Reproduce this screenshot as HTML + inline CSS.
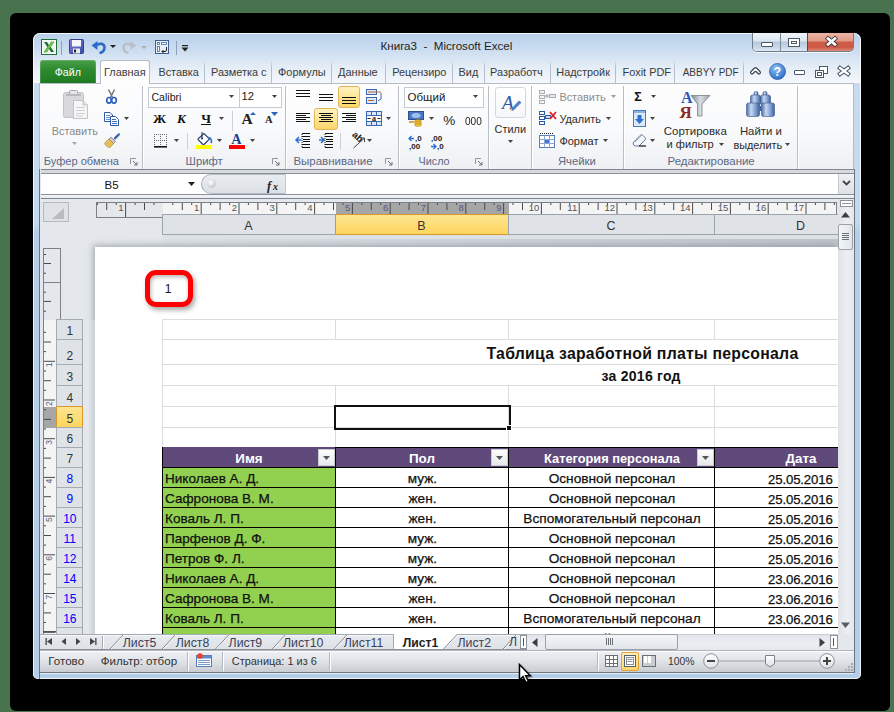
<!DOCTYPE html>
<html><head><meta charset="utf-8">
<style>
*{box-sizing:border-box}
html,body{margin:0;padding:0}
body{width:894px;height:712px;overflow:hidden;position:relative;background:#49724e;font-family:"Liberation Sans",sans-serif;color:#000}
.a{position:absolute}
svg.a{overflow:visible}
.t{position:absolute;white-space:pre;line-height:1}
</style></head><body>
<div class="a" style="left:10px;top:13px;width:880px;height:698px;background:#000;border-radius:6px"></div>
<div class="a" style="left:33px;top:33px;width:828px;height:646px;border-radius:7px 7px 5px 5px;background:linear-gradient(#c9dcf0 0,#c4d9ef 190px,#b4cde8 200px,#b4cde8 100%);box-shadow:inset 0 0 0 1px rgba(255,255,255,.8)"></div>
<div class="a" style="left:34px;top:34px;width:826px;height:49px;border-radius:6px 6px 0 0;background:linear-gradient(#b9d1ea 0,#c9dbef 14px,#e3ecf6 32px,#f5f8fc 49px)"></div>
<div class="t " style="left:380.5px;top:39.7px;font-size:11.6px;color:#1e1e1e;font-weight:400;">Книга3  -  Microsoft Excel</div>
<div class="a" style="left:752px;top:33px;width:102px;height:19px;border:1px solid #6f7d8c;border-top:none;border-radius:0 0 5px 5px;overflow:hidden;box-shadow:0 1px 0 rgba(255,255,255,.7)">
<div class="a" style="left:0;top:0;width:28px;height:18px;background:linear-gradient(#f2f6fb 0,#dbe5f0 45%,#b9c9db 50%,#c9d8e8 80%,#dfe9f4 100%);border-right:1px solid #7d8a99"></div>
<div class="a" style="left:28px;top:0;width:27px;height:18px;background:linear-gradient(#f2f6fb 0,#dbe5f0 45%,#b9c9db 50%,#c9d8e8 80%,#dfe9f4 100%);border-right:1px solid #7d3a2c"></div>
<div class="a" style="left:55px;top:0;width:46px;height:18px;background:linear-gradient(#ecb4a6 0,#e29c8a 42%,#cf5d48 52%,#cc5843 78%,#dc8a78 100%)"></div>
</div>
<div class="a" style="left:761px;top:42px;width:12px;height:5px;background:#fff;border:1px solid #4c5866;border-radius:1px"></div>
<div class="a" style="left:788px;top:38px;width:12px;height:9px;border:1px solid #4c5866;background:#fff;box-shadow:inset 0 0 0 2px #fff, inset 0 0 0 3px #4c5866"></div>
<svg class="a" style="left:826px;top:37px;" width="11" height="9" viewBox="0 0 11 9"><path d="M2 1.5 L9 7.5 M9 1.5 L2 7.5" stroke="#4a3c3a" stroke-width="4.4" stroke-linecap="square"/><path d="M2 1.5 L9 7.5 M9 1.5 L2 7.5" stroke="#fff" stroke-width="2.6" stroke-linecap="square"/></svg>
<svg class="a" style="left:41px;top:39px;" width="16" height="16" viewBox="0 0 16 16"><rect x="0.5" y="0.5" width="15" height="15" fill="#fff" stroke="#1f6e35"/><rect x="1.5" y="1.5" width="13" height="13" fill="#eef5ee"/><path d="M3 3 H6 L8 6.3 L10 3 H13 L9.6 8 L13 13 H10 L8 9.7 L6 13 H3 L6.4 8Z" fill="#1f6a35"/><path d="M10.2 2.5 H13 L5.8 13.5 H3Z" fill="#6cc24a"/></svg>
<div class="a" style="left:61px;top:41px;width:1px;height:14px;background:#8ea3bb"></div>
<svg class="a" style="left:69px;top:39px;" width="15" height="15" viewBox="0 0 15 15"><defs><linearGradient id="sv" x1="0" y1="0" x2="1" y2="1"><stop offset="0" stop-color="#8a7ad8"/><stop offset="1" stop-color="#2f4fa8"/></linearGradient></defs><rect x="0.5" y="0.5" width="14" height="14" rx="1" fill="url(#sv)" stroke="#34408a"/><rect x="3" y="1" width="9" height="6.5" fill="#f4f6fa"/><rect x="4" y="9.5" width="7" height="5" fill="#e8eaf0"/><rect x="5" y="10.5" width="2" height="3" fill="#222"/></svg>
<svg class="a" style="left:91px;top:40px;" width="15" height="14" viewBox="0 0 15 14"><path d="M0.5 5.5 L6.5 1 V10Z" fill="#2e6bc6"/><path d="M5 5.5 C9 2.5 13.5 3.5 13.5 7.5 C13.5 10.5 11 12.5 8.5 13" fill="none" stroke="#2e6bc6" stroke-width="2.6"/></svg>
<svg class="a" style="left:110px;top:45px;" width="6" height="3" viewBox="0 0 6 3"><path d="M0 0H6L3 3Z" fill="#222"/></svg>
<svg class="a" style="left:122px;top:40px;" width="15" height="14" viewBox="0 0 15 14"><path d="M14.5 5.5 L8.5 1 V10Z" fill="#b9c0c8"/><path d="M10 5.5 C6 2.5 1.5 3.5 1.5 7.5 C1.5 10.5 4 12.5 6.5 13" fill="none" stroke="#b9c0c8" stroke-width="2.6"/></svg>
<svg class="a" style="left:141px;top:46px;" width="6" height="3" viewBox="0 0 6 3"><path d="M0 0H6L3 3Z" fill="#a8aeb5"/></svg>
<svg class="a" style="left:155px;top:40px;" width="14" height="14" viewBox="0 0 14 14"><rect x="0.5" y="0.5" width="13" height="13" fill="#e6eef8" stroke="#3f5f95"/><rect x="2.5" y="2.5" width="2" height="2" fill="#fff" stroke="#4a6aa0" stroke-width=".8"/><rect x="6.5" y="2.5" width="5" height="2" fill="#fff" stroke="#4a6aa0" stroke-width=".8"/><rect x="2.5" y="6.5" width="2" height="5" fill="#fff" stroke="#4a6aa0" stroke-width=".8"/><path d="M11.5 7 V10 Q11.5 11.5 10 11.5 H7 M8.5 10 L7 11.5 L8.5 13" fill="none" stroke="#222" stroke-width="1"/></svg>
<div class="a" style="left:176px;top:41px;width:1px;height:14px;background:#8ea3bb"></div>
<svg class="a" style="left:181px;top:45px;" width="8" height="8" viewBox="0 0 8 8"><rect x="1" y="0" width="6" height="1.2" fill="#222"/><path d="M0.5 2.5H7.5L4 6.5Z" fill="#222"/></svg>
<div class="a" style="left:40px;top:60px;width:56px;height:24px;border-radius:3px 3px 0 0;background:linear-gradient(#4aa04a 0,#2e8a2e 40%,#1e7a22 100%);box-shadow:inset 0 0 0 1px rgba(255,255,255,.15)"></div>
<div class="t " style="left:54.7px;top:66.9px;font-size:10.7px;color:#fff;font-weight:400;">Файл</div>
<div class="a" style="left:100px;top:60px;width:50px;height:24px;border:1px solid #b6bcc6;border-bottom:none;border-radius:3px 3px 0 0;background:linear-gradient(#fff,#fdfdfe)"></div>
<div class="t " style="left:104.0px;top:66.8px;font-size:10.93px;color:#3b3b3b;font-weight:400;">Главная</div>
<div class="t " style="left:158.4px;top:66.9px;font-size:10.9px;color:#3b3b3b;font-weight:400;">Вставка</div>
<div class="t " style="left:211.0px;top:66.9px;font-size:10.9px;color:#3b3b3b;font-weight:400;width:56px;overflow:hidden">Разметка с</div>
<div class="t " style="left:278.0px;top:66.8px;font-size:10.96px;color:#3b3b3b;font-weight:400;">Формулы</div>
<div class="t " style="left:338.0px;top:66.8px;font-size:11px;color:#3b3b3b;font-weight:400;">Данные</div>
<div class="t " style="left:392.2px;top:66.9px;font-size:10.9px;color:#3b3b3b;font-weight:400;width:55px;overflow:hidden">Рецензиро</div>
<div class="t " style="left:458.6px;top:66.9px;font-size:10.9px;color:#3b3b3b;font-weight:400;">Вид</div>
<div class="t " style="left:490.1px;top:66.9px;font-size:10.9px;color:#3b3b3b;font-weight:400;width:54px;overflow:hidden">Разработч</div>
<div class="t " style="left:556.3px;top:66.9px;font-size:10.9px;color:#3b3b3b;font-weight:400;width:54px;overflow:hidden">Надстройк</div>
<div class="t " style="left:622.5px;top:66.9px;font-size:10.9px;color:#3b3b3b;font-weight:400;">Foxit PDF</div>
<div class="t " style="left:682.7px;top:67.6px;font-size:10px;color:#3b3b3b;font-weight:400;">ABBYY PDF</div>
<div class="a" style="left:204px;top:60px;width:1px;height:23px;background:linear-gradient(rgba(170,182,196,0),#b4bfcc 30%,#b4bfcc)"></div>
<div class="a" style="left:271px;top:60px;width:1px;height:23px;background:linear-gradient(rgba(170,182,196,0),#b4bfcc 30%,#b4bfcc)"></div>
<div class="a" style="left:331px;top:60px;width:1px;height:23px;background:linear-gradient(rgba(170,182,196,0),#b4bfcc 30%,#b4bfcc)"></div>
<div class="a" style="left:385px;top:60px;width:1px;height:23px;background:linear-gradient(rgba(170,182,196,0),#b4bfcc 30%,#b4bfcc)"></div>
<div class="a" style="left:452px;top:60px;width:1px;height:23px;background:linear-gradient(rgba(170,182,196,0),#b4bfcc 30%,#b4bfcc)"></div>
<div class="a" style="left:484px;top:60px;width:1px;height:23px;background:linear-gradient(rgba(170,182,196,0),#b4bfcc 30%,#b4bfcc)"></div>
<div class="a" style="left:550px;top:60px;width:1px;height:23px;background:linear-gradient(rgba(170,182,196,0),#b4bfcc 30%,#b4bfcc)"></div>
<div class="a" style="left:615px;top:60px;width:1px;height:23px;background:linear-gradient(rgba(170,182,196,0),#b4bfcc 30%,#b4bfcc)"></div>
<div class="a" style="left:674px;top:60px;width:1px;height:23px;background:linear-gradient(rgba(170,182,196,0),#b4bfcc 30%,#b4bfcc)"></div>
<div class="a" style="left:743px;top:60px;width:1px;height:23px;background:linear-gradient(rgba(170,182,196,0),#b4bfcc 30%,#b4bfcc)"></div>
<svg class="a" style="left:750px;top:66px;" width="11" height="9" viewBox="0 0 11 9"><path d="M2 6.5 L5.5 3 L9 6.5" fill="none" stroke="#3d4650" stroke-width="4" stroke-linecap="round" stroke-linejoin="round"/><path d="M2 6.5 L5.5 3 L9 6.5" fill="none" stroke="#fff" stroke-width="1.6" stroke-linecap="round" stroke-linejoin="round"/></svg>
<svg class="a" style="left:769px;top:63px;" width="17" height="17" viewBox="0 0 17 17"><defs><radialGradient id="hg" cx="40%" cy="30%" r="70%"><stop offset="0" stop-color="#8fc1f5"/><stop offset="1" stop-color="#2c6fcc"/></radialGradient></defs><circle cx="8.5" cy="8.5" r="8" fill="url(#hg)" stroke="#2a5ea8" stroke-width="0.8"/><text x="8.5" y="13" font-family="Liberation Sans" font-weight="700" font-size="12" fill="#fff" text-anchor="middle">?</text></svg>
<div class="a" style="left:794px;top:70px;width:11px;height:5px;border:1px solid #4c5866;background:#fff;border-radius:1px"></div>
<svg class="a" style="left:815px;top:66px;" width="13" height="12" viewBox="0 0 13 12"><rect x="4.5" y="0.5" width="8" height="7" fill="#fff" stroke="#4c5866"/><rect x="0.5" y="4.5" width="8" height="7" fill="#fff" stroke="#4c5866"/><rect x="2.5" y="6.5" width="4" height="3" fill="none" stroke="#4c5866"/></svg>
<svg class="a" style="left:838px;top:66px;" width="12" height="10" viewBox="0 0 12 10"><path d="M2 2 L10 8 M10 2 L2 8" stroke="#4c5866" stroke-width="4.2" stroke-linecap="square"/><path d="M2 2 L10 8 M10 2 L2 8" stroke="#fff" stroke-width="2.2" stroke-linecap="square"/></svg>
<div class="a" style="left:39px;top:83px;width:815px;height:87px;border:1px solid #b6bcc6;border-bottom-color:#9da4ad;background:linear-gradient(#fdfdfe 0,#f9fafb 45px,#eef0f3 85px)"></div>
<div class="a" style="left:101px;top:83px;width:48px;height:1px;background:#fdfdfe"></div>
<div class="a" style="left:142px;top:86px;width:2px;height:83px;border-left:1px solid #b9bfc7;border-right:1px solid #fff"></div>
<div class="a" style="left:285px;top:86px;width:2px;height:83px;border-left:1px solid #b9bfc7;border-right:1px solid #fff"></div>
<div class="a" style="left:398px;top:86px;width:2px;height:83px;border-left:1px solid #b9bfc7;border-right:1px solid #fff"></div>
<div class="a" style="left:488px;top:86px;width:2px;height:83px;border-left:1px solid #b9bfc7;border-right:1px solid #fff"></div>
<div class="a" style="left:531px;top:86px;width:2px;height:83px;border-left:1px solid #b9bfc7;border-right:1px solid #fff"></div>
<div class="a" style="left:623px;top:86px;width:2px;height:83px;border-left:1px solid #b9bfc7;border-right:1px solid #fff"></div>
<div class="a" style="left:797px;top:86px;width:2px;height:83px;border-left:1px solid #b9bfc7;border-right:1px solid #fff"></div>
<div class="t " style="left:43.7px;top:155.9px;font-size:11.08px;color:#5d6782;font-weight:400;">Буфер обмена</div>
<div class="t " style="left:185.6px;top:155.7px;font-size:11.3px;color:#5d6782;font-weight:400;">Шрифт</div>
<div class="t " style="left:293.4px;top:155.6px;font-size:11.5px;color:#5d6782;font-weight:400;">Выравнивание</div>
<div class="t " style="left:418.5px;top:156.2px;font-size:10.8px;color:#5d6782;font-weight:400;">Число</div>
<div class="t " style="left:557.9px;top:155.7px;font-size:11.3px;color:#5d6782;font-weight:400;">Ячейки</div>
<div class="t " style="left:667.6px;top:155.6px;font-size:11.45px;color:#5d6782;font-weight:400;">Редактирование</div>
<svg class="a" style="left:130px;top:158px;" width="8" height="8" viewBox="0 0 8 8"><path d="M0.5 6 V0.5 H6" fill="none" stroke="#8d96a0"/><path d="M3 3 L7 7 M7 4 V7 H4" fill="none" stroke="#6a737d"/></svg>
<svg class="a" style="left:272px;top:158px;" width="8" height="8" viewBox="0 0 8 8"><path d="M0.5 6 V0.5 H6" fill="none" stroke="#8d96a0"/><path d="M3 3 L7 7 M7 4 V7 H4" fill="none" stroke="#6a737d"/></svg>
<svg class="a" style="left:385px;top:158px;" width="8" height="8" viewBox="0 0 8 8"><path d="M0.5 6 V0.5 H6" fill="none" stroke="#8d96a0"/><path d="M3 3 L7 7 M7 4 V7 H4" fill="none" stroke="#6a737d"/></svg>
<svg class="a" style="left:475px;top:158px;" width="8" height="8" viewBox="0 0 8 8"><path d="M0.5 6 V0.5 H6" fill="none" stroke="#8d96a0"/><path d="M3 3 L7 7 M7 4 V7 H4" fill="none" stroke="#6a737d"/></svg>
<svg class="a" style="left:62px;top:89px;" width="27" height="31" viewBox="0 0 27 31">
<rect x="1.5" y="3.5" width="20" height="25" rx="2" fill="#d9d8dc" stroke="#c2c1c6"/>
<rect x="7.5" y="1.5" width="8" height="4" rx="1" fill="#e6e6e8" stroke="#a9a9ad"/>
<rect x="4" y="5" width="15" height="2" fill="#b9b9bd"/>
<path d="M11.5 11.5 H21 L25.5 16 V29.5 H11.5 Z" fill="#f7f7f8" stroke="#c3c3c7"/>
<path d="M21 11.5 V16 H25.5" fill="#e1e1e3" stroke="#c3c3c7"/>
<g stroke="#d0d0d4"><path d="M14 18.5H23M14 21.5H23M14 24.5H23M14 27H21"/></g></svg>
<div class="t " style="left:51.7px;top:126.2px;font-size:10.9px;color:#8a8a8a;font-weight:400;">Вставить</div>
<svg class="a" style="left:72px;top:142px;" width="5" height="3" viewBox="0 0 5 3"><path d="M0 0H5L2.5 3Z" fill="#a6a6a6"/></svg>
<svg class="a" style="left:106px;top:89px;" width="11" height="15" viewBox="0 0 11 15"><path d="M2.5 0.5 L6.5 8.5 M8.5 0.5 L4.5 8.5" stroke="#6e7680" stroke-width="1.5"/>
<ellipse cx="3" cy="11.3" rx="2.3" ry="2.8" fill="#fff" stroke="#2a5fbf" stroke-width="1.7"/><ellipse cx="8" cy="11.3" rx="2.3" ry="2.8" fill="#fff" stroke="#2a5fbf" stroke-width="1.7"/></svg>
<svg class="a" style="left:104px;top:112px;" width="15" height="14" viewBox="0 0 15 14"><path d="M0.5 0.5 H6 L8.5 3 V9.5 H0.5Z" fill="#fff" stroke="#2c5aa8"/><path d="M2 3.5H6M2 5.5H7M2 7.5H7" stroke="#6a96d8"/>
<path d="M6.5 4.5 H11.5 L14.5 7.5 V13.5 H6.5Z" fill="#fff" stroke="#2c5aa8"/><path d="M8 7.5H12M8 9.5H13M8 11.5H13" stroke="#3d6fc0"/></svg>
<svg class="a" style="left:124px;top:117px;" width="5" height="3" viewBox="0 0 5 3"><path d="M0 0H5L2.5 3Z" fill="#444"/></svg>
<svg class="a" style="left:104px;top:133px;" width="16" height="15" viewBox="0 0 16 15"><path d="M10 5 L14 1 Q15 0 15.6 0.8 Q16 1.6 15 2.5 L11 6.5Z" fill="#3a62b8" stroke="#2a4a90" stroke-width=".6"/>
<path d="M7 4 L11.5 8.5 L9.5 10.5 L5 6Z" fill="#c8ccd2" stroke="#666" stroke-width=".6"/>
<path d="M5 6 L9.5 10.5 L6 14.5 Q3 14 1 11.5 Q0.5 10 1.5 9Z" fill="#ecc860" stroke="#a07c2a" stroke-width=".7"/>
<path d="M3 10 L6 12.5 M4.5 8.5 L7.5 11" stroke="#c09a3a" stroke-width=".7"/></svg>
<div class="a" style="left:148px;top:87px;width:92px;height:21px;background:#fff;border:1px solid #c5cbd3"></div>
<div class="a" style="left:239px;top:87px;width:43px;height:21px;background:#fff;border:1px solid #c5cbd3"></div>
<div class="t " style="left:151.4px;top:91.9px;font-size:10.6px;color:#1a1a1a;font-weight:400;">Calibri</div>
<div class="t " style="left:241.5px;top:91.4px;font-size:11.2px;color:#1a1a1a;font-weight:400;">12</div>
<svg class="a" style="left:229px;top:95px;" width="5" height="3" viewBox="0 0 5 3"><path d="M0 0H5L2.5 3Z" fill="#444"/></svg>
<svg class="a" style="left:272px;top:95px;" width="5" height="3" viewBox="0 0 5 3"><path d="M0 0H5L2.5 3Z" fill="#444"/></svg>
<div class="t " style="left:153.0px;top:112.4px;font-size:13.2px;color:#111;font-weight:700;font-family:'Liberation Serif',serif;">Ж</div>
<div class="t " style="left:177.0px;top:112.4px;font-size:13.2px;color:#111;font-weight:700;font-family:'Liberation Serif',serif;font-style:italic">К</div>
<div class="t " style="left:201.2px;top:112.4px;font-size:13.2px;color:#111;font-weight:700;font-family:'Liberation Serif',serif;">Ч</div>
<div class="a" style="left:201px;top:124px;width:10px;height:1px;background:#111"></div>
<svg class="a" style="left:219px;top:117px;" width="5" height="3" viewBox="0 0 5 3"><path d="M0 0H5L2.5 3Z" fill="#444"/></svg>
<div class="a" style="left:232px;top:111px;width:1px;height:20px;background:#ccd1d8"></div>
<div class="t " style="left:241.5px;top:110.8px;font-size:15.5px;color:#222;font-weight:700;font-family:'Liberation Serif',serif;">A</div>
<svg class="a" style="left:250px;top:112px;" width="6" height="3" viewBox="0 0 6 3"><path d="M0 3H6L3 0Z" fill="#2a5fbf"/></svg>
<div class="t " style="left:265.0px;top:115.0px;font-size:10.5px;color:#222;font-weight:700;font-family:'Liberation Serif',serif;">A</div>
<svg class="a" style="left:271px;top:112px;" width="7" height="4" viewBox="0 0 7 4"><path d="M0 0H7L3.5 4Z" fill="#2a5fbf"/></svg>
<svg class="a" style="left:154px;top:134px;" width="13" height="14" viewBox="0 0 13 14"><g fill="#6a6a6a"><rect x="0" y="0" width="1" height="1"/><rect x="2" y="0" width="1" height="1"/><rect x="4" y="0" width="1" height="1"/><rect x="6" y="0" width="1" height="1"/><rect x="8" y="0" width="1" height="1"/><rect x="10" y="0" width="1" height="1"/><rect x="12" y="0" width="1" height="1"/><rect x="0" y="6" width="1" height="1"/><rect x="2" y="6" width="1" height="1"/><rect x="4" y="6" width="1" height="1"/><rect x="6" y="6" width="1" height="1"/><rect x="8" y="6" width="1" height="1"/><rect x="10" y="6" width="1" height="1"/><rect x="12" y="6" width="1" height="1"/><rect x="0" y="2" width="1" height="1"/><rect x="0" y="4" width="1" height="1"/><rect x="0" y="6" width="1" height="1"/><rect x="0" y="8" width="1" height="1"/><rect x="0" y="10" width="1" height="1"/><rect x="6" y="2" width="1" height="1"/><rect x="6" y="4" width="1" height="1"/><rect x="6" y="6" width="1" height="1"/><rect x="6" y="8" width="1" height="1"/><rect x="6" y="10" width="1" height="1"/><rect x="12" y="2" width="1" height="1"/><rect x="12" y="4" width="1" height="1"/><rect x="12" y="6" width="1" height="1"/><rect x="12" y="8" width="1" height="1"/><rect x="12" y="10" width="1" height="1"/></g><rect x="0" y="12" width="13" height="1.6" fill="#111"/></svg>
<svg class="a" style="left:174px;top:139px;" width="5" height="3" viewBox="0 0 5 3"><path d="M0 0H5L2.5 3Z" fill="#444"/></svg>
<div class="a" style="left:187px;top:133px;width:1px;height:17px;background:#ccd1d8"></div>
<svg class="a" style="left:196px;top:131px;" width="17" height="18" viewBox="0 0 17 18"><path d="M2.5 7.5 L8 2.5 L13.5 8 L8.5 13 Q7.5 14 6.5 13 L2.5 9 Q1.5 8 2.5 7.5Z" fill="#fff" stroke="#2a3f6a" stroke-width="1.1"/>
<path d="M6 1 V7" stroke="#2a3f6a" stroke-width="1.1"/><circle cx="6" cy="7.5" r="1.1" fill="#2a3f6a"/><path d="M12.5 6.5 C15.5 7 16 10 15 12" fill="none" stroke="#3d7bd4" stroke-width="1.8"/>
<rect x="0" y="14" width="16" height="4" fill="#ffff00"/></svg>
<svg class="a" style="left:217px;top:139px;" width="5" height="3" viewBox="0 0 5 3"><path d="M0 0H5L2.5 3Z" fill="#444"/></svg>
<div class="t " style="left:231.2px;top:131.9px;font-size:14.2px;color:#1d3f8a;font-weight:700;font-family:'Liberation Serif',serif;">A</div>
<div class="a" style="left:229px;top:145px;width:16px;height:4px;background:#ff0000"></div>
<svg class="a" style="left:250px;top:139px;" width="5" height="3" viewBox="0 0 5 3"><path d="M0 0H5L2.5 3Z" fill="#444"/></svg>
<svg class="a" style="left:296px;top:90px;" width="16" height="10" viewBox="0 0 16 10"><rect x="0" y="0" width="14" height="1" fill="#111"/><rect x="0" y="3" width="14" height="1" fill="#111"/><rect x="0" y="6" width="14" height="1" fill="#111"/></svg>
<svg class="a" style="left:319px;top:94px;" width="16" height="10" viewBox="0 0 16 10"><rect x="0" y="0" width="14" height="1" fill="#111"/><rect x="0" y="3" width="14" height="1" fill="#111"/><rect x="0" y="6" width="14" height="1" fill="#111"/></svg>
<div class="a" style="left:338px;top:86px;width:22px;height:22px;border:1px solid #e2b457;border-radius:3px;background:linear-gradient(#fff3c0,#fde38c 60%,#fcd66a)"></div>
<svg class="a" style="left:342px;top:97px;" width="16" height="10" viewBox="0 0 16 10"><rect x="0" y="0" width="14" height="1" fill="#111"/><rect x="0" y="3" width="14" height="1" fill="#111"/><rect x="0" y="6" width="14" height="1" fill="#111"/></svg>
<div class="a" style="left:314px;top:108px;width:24px;height:22px;border:1px solid #e2b457;border-radius:3px;background:linear-gradient(#fff3c0,#fde38c 60%,#fcd66a)"></div>
<svg class="a" style="left:296px;top:113px;" width="16" height="11" viewBox="0 0 16 11"><rect x="0" y="0" width="14" height="1" fill="#111"/><rect x="0" y="2" width="10" height="1" fill="#111"/><rect x="0" y="4" width="14" height="1" fill="#111"/><rect x="0" y="6" width="10" height="1" fill="#111"/><rect x="0" y="8" width="14" height="1" fill="#111"/></svg>
<svg class="a" style="left:319px;top:113px;" width="16" height="11" viewBox="0 0 16 11"><rect x="0" y="0" width="14" height="1" fill="#111"/><rect x="2" y="2" width="10" height="1" fill="#111"/><rect x="0" y="4" width="14" height="1" fill="#111"/><rect x="2" y="6" width="10" height="1" fill="#111"/><rect x="0" y="8" width="14" height="1" fill="#111"/></svg>
<svg class="a" style="left:342px;top:113px;" width="16" height="11" viewBox="0 0 16 11"><rect x="0" y="0" width="14" height="1" fill="#111"/><rect x="4" y="2" width="10" height="1" fill="#111"/><rect x="0" y="4" width="14" height="1" fill="#111"/><rect x="4" y="6" width="10" height="1" fill="#111"/><rect x="0" y="8" width="14" height="1" fill="#111"/></svg>
<svg class="a" style="left:366px;top:89px;" width="17" height="16" viewBox="0 0 17 16"><rect x="0.5" y="0.5" width="10" height="5" fill="#dce8f7" stroke="#3a67b0"/><path d="M2 3H15" stroke="#b0683a"/>
<rect x="0.5" y="8.5" width="10" height="6" fill="#dce8f7" stroke="#3a67b0"/><path d="M2 11.5H8" stroke="#b0683a"/><path d="M15 4 V10 L12 12" fill="none" stroke="#3a67b0"/></svg>
<svg class="a" style="left:366px;top:111px;" width="16" height="15" viewBox="0 0 16 15"><rect x="0.5" y="0.5" width="15" height="14" fill="#dbe7f6" stroke="#3a67b0"/><path d="M0.5 4.5H15.5M0.5 10.5H15.5M5.5 0.5V4.5M10.5 0.5V4.5M5.5 10.5V14.5M10.5 10.5V14.5" stroke="#3a67b0"/>
<rect x="1" y="5" width="14" height="5" fill="#fff"/><text x="8" y="10" font-family="Liberation Serif" font-weight="700" font-size="8" text-anchor="middle" fill="#222">a</text><path d="M1.5 7.5H4.5M11.5 7.5H14.5" stroke="#222"/></svg>
<svg class="a" style="left:386px;top:117px;" width="5" height="3" viewBox="0 0 5 3"><path d="M0 0H5L2.5 3Z" fill="#444"/></svg>
<svg class="a" style="left:295px;top:133px;" width="16" height="15" viewBox="0 0 16 15"><path d="M4 4 L1 7 L4 10 M1 7 H6" fill="none" stroke="#2f6fd0" stroke-width="1.5"/>
<path d="M7 0.5H15M7 3.5H15M8 6.5H15M8 8.5H15M7 11.5H15M7 14.5H15" stroke="#111"/><path d="M7 1V15" stroke="#111" stroke-dasharray="1 1"/></svg>
<svg class="a" style="left:318px;top:133px;" width="16" height="15" viewBox="0 0 16 15"><path d="M3 4 L6 7 L3 10 M1 7 H6" fill="none" stroke="#2f6fd0" stroke-width="1.5"/>
<path d="M7 0.5H15M7 3.5H15M8 6.5H15M8 8.5H15M7 11.5H15M7 14.5H15" stroke="#111"/><path d="M7 1V15" stroke="#111" stroke-dasharray="1 1"/></svg>
<div class="a" style="left:340px;top:133px;width:1px;height:17px;background:#ccd1d8"></div>
<svg class="a" style="left:349px;top:132px;" width="17" height="17" viewBox="0 0 17 17"><text transform="translate(2.5,3.5) rotate(42)" font-family="Liberation Sans" font-weight="700" font-size="9.5" fill="#222">ab</text><path d="M4.5 16 L15 6.5" stroke="#444" stroke-width="1"/><path d="M11.5 6 H15.5 V10" fill="none" stroke="#444" stroke-width="1"/></svg>
<svg class="a" style="left:367px;top:139px;" width="5" height="3" viewBox="0 0 5 3"><path d="M0 0H5L2.5 3Z" fill="#444"/></svg>
<div class="a" style="left:404px;top:87px;width:80px;height:21px;background:#fff;border:1px solid #c5cbd3"></div>
<div class="t " style="left:407.5px;top:91.7px;font-size:11.5px;color:#1a1a1a;font-weight:400;">Общий</div>
<svg class="a" style="left:473px;top:95px;" width="5" height="3" viewBox="0 0 5 3"><path d="M0 0H5L2.5 3Z" fill="#444"/></svg>
<svg class="a" style="left:408px;top:111px;" width="17" height="15" viewBox="0 0 17 15"><rect x="0.5" y="0.5" width="15" height="8" fill="#4a74c4" stroke="#2c4f90"/><ellipse cx="8" cy="4.5" rx="4.5" ry="2.5" fill="#9ec0ee"/>
<ellipse cx="10" cy="10" rx="3.5" ry="1.3" fill="#f0c040" stroke="#b8860b" stroke-width=".6"/><ellipse cx="10" cy="12" rx="3.5" ry="1.3" fill="#f0c040" stroke="#b8860b" stroke-width=".6"/><ellipse cx="10" cy="14" rx="3.5" ry="1.3" fill="#f0c040" stroke="#b8860b" stroke-width=".6"/><path d="M1 11 H6" stroke="#d08a10" stroke-width="1.5"/></svg>
<svg class="a" style="left:429px;top:117px;" width="5" height="3" viewBox="0 0 5 3"><path d="M0 0H5L2.5 3Z" fill="#444"/></svg>
<div class="t " style="left:443.2px;top:113.6px;font-size:13.5px;color:#222;font-weight:400;">%</div>
<div class="t " style="left:465.2px;top:115.5px;font-size:11.2px;color:#222;font-weight:400;transform:scaleX(.9);transform-origin:left">000</div>
<svg class="a" style="left:408px;top:134px;" width="16" height="16" viewBox="0 0 16 16"><path d="M1 4.5 H6 M3.5 2 L1 4.5 L3.5 7" fill="none" stroke="#2f6fd0" stroke-width="1.3"/>
<text x="7" y="7" font-family="Liberation Sans" font-weight="700" font-size="8" fill="#222">,0</text><text x="1" y="15" font-family="Liberation Sans" font-weight="700" font-size="8" fill="#222">,00</text></svg>
<svg class="a" style="left:430px;top:134px;" width="16" height="16" viewBox="0 0 16 16"><text x="1" y="7" font-family="Liberation Sans" font-weight="700" font-size="8" fill="#222">,00</text>
<path d="M1 12.5 H6 M3.5 10 L6 12.5 L3.5 15" fill="none" stroke="#2f6fd0" stroke-width="1.3"/><text x="7" y="15" font-family="Liberation Sans" font-weight="700" font-size="8" fill="#222">,0</text></svg>
<div class="a" style="left:495px;top:87px;width:31px;height:31px;border:1px solid #d3d8de;border-radius:3px;background:linear-gradient(#fff,#f6f7f9)"></div>
<svg class="a" style="left:500px;top:92px;" width="22" height="20" viewBox="0 0 22 20"><text x="2" y="17" font-family="Liberation Serif" font-style="italic" font-size="19" fill="#2d5aa8">A</text>
<path d="M11 17.5 L19 9 L21 10.5 L13 18.5Z" fill="#4a86d8" stroke="#2a56a0" stroke-width=".6"/><path d="M10 18.5 L12.5 18.5 L11.2 15.5Z" fill="#e8c050"/></svg>
<div class="t " style="left:494.6px;top:124.0px;font-size:10.9px;color:#2c2c2c;font-weight:400;">Стили</div>
<svg class="a" style="left:508px;top:140px;" width="5" height="3" viewBox="0 0 5 3"><path d="M0 0H5L2.5 3Z" fill="#444"/></svg>
<svg class="a" style="left:539px;top:90px;" width="17" height="14" viewBox="0 0 17 14"><rect x="0.5" y="0.5" width="5" height="3" fill="#f4f4f4" stroke="#a8adb3"/><rect x="0.5" y="5.5" width="5" height="3" fill="#f4f4f4" stroke="#a8adb3"/><rect x="0.5" y="10.5" width="5" height="3" fill="#f4f4f4" stroke="#a8adb3"/>
<rect x="10.5" y="4.5" width="6" height="3" fill="#e8e8e8" stroke="#a8adb3"/><path d="M6 6 H10 M8 4 V8" stroke="#9aa0a6"/></svg>
<div class="t " style="left:559.4px;top:91.9px;font-size:10.9px;color:#8c8c8c;font-weight:400;">Вставить</div>
<svg class="a" style="left:611px;top:95px;" width="5" height="3" viewBox="0 0 5 3"><path d="M0 0H5L2.5 3Z" fill="#9a9a9a"/></svg>
<svg class="a" style="left:539px;top:111px;" width="18" height="15" viewBox="0 0 18 15"><rect x="0.5" y="0.5" width="5" height="3" fill="#fff" stroke="#2c5aa8"/><rect x="0.5" y="5.5" width="5" height="3" fill="#fff" stroke="#2c5aa8"/><rect x="0.5" y="10.5" width="5" height="3" fill="#fff" stroke="#2c5aa8"/>
<rect x="6.5" y="4.5" width="5" height="3" fill="#cfe0f5" stroke="#2c5aa8"/><path d="M11 1 L17 8 M17 1 L11 8" stroke="#e02020" stroke-width="1.8"/></svg>
<div class="t " style="left:559.4px;top:113.8px;font-size:10.9px;color:#2c2c2c;font-weight:400;">Удалить</div>
<svg class="a" style="left:606px;top:117px;" width="5" height="3" viewBox="0 0 5 3"><path d="M0 0H5L2.5 3Z" fill="#444"/></svg>
<svg class="a" style="left:539px;top:133px;" width="16" height="15" viewBox="0 0 16 15"><rect x="0.5" y="2.5" width="15" height="12" fill="#fff" stroke="#5b7db8"/><path d="M0.5 6.5H15.5M0.5 10.5H15.5M5.5 2.5V14.5M10.5 2.5V14.5" stroke="#8aa6d4"/>
<rect x="6" y="7" width="4" height="3" fill="#3b7be0"/><path d="M1 0.5H15" stroke="#222" stroke-dasharray="1 1"/></svg>
<div class="t " style="left:559.4px;top:135.7px;font-size:11px;color:#2c2c2c;font-weight:400;">Формат</div>
<svg class="a" style="left:603px;top:139px;" width="5" height="3" viewBox="0 0 5 3"><path d="M0 0H5L2.5 3Z" fill="#444"/></svg>
<div class="t " style="left:634.3px;top:91.4px;font-size:12.5px;color:#111;font-weight:700;">Σ</div>
<svg class="a" style="left:651px;top:95px;" width="5" height="3" viewBox="0 0 5 3"><path d="M0 0H5L2.5 3Z" fill="#444"/></svg>
<svg class="a" style="left:633px;top:110px;" width="13" height="17" viewBox="0 0 13 17"><rect x="0.5" y="0.5" width="12" height="16" fill="#dce9f8" stroke="#4a78c0"/><rect x="1" y="1" width="11" height="2" fill="#8fb2e0"/>
<path d="M4.5 5 H8.5 V9 H11 L6.5 14 L2 9 H4.5Z" fill="#2f6fd0"/></svg>
<svg class="a" style="left:650px;top:117px;" width="5" height="3" viewBox="0 0 5 3"><path d="M0 0H5L2.5 3Z" fill="#444"/></svg>
<svg class="a" style="left:632px;top:134px;" width="15" height="13" viewBox="0 0 15 13"><path d="M1 9 L8 1.5 Q9.5 0 11 1.5 L13 3.5 Q14 5 13 6 L7 12 H3.5 Q1 11.5 1 9Z" fill="#f2f5fa" stroke="#5b6d90" stroke-width=".9"/>
<path d="M7 12 H14" stroke="#111" stroke-width="1.2"/><path d="M3 8 L9 2" stroke="#a8b8d8"/></svg>
<svg class="a" style="left:650px;top:139px;" width="5" height="3" viewBox="0 0 5 3"><path d="M0 0H5L2.5 3Z" fill="#444"/></svg>
<svg class="a" style="left:679px;top:89px;" width="33" height="30" viewBox="0 0 33 30"><defs><linearGradient id="fn" x1="0" x2="1"><stop offset="0" stop-color="#7d858e"/><stop offset=".5" stop-color="#d9dde2"/><stop offset="1" stop-color="#9aa1a9"/></linearGradient></defs>
<path d="M12 6.5 H31 L23 15 V27 L18.5 27 V15Z" fill="url(#fn)" stroke="#7a8189" stroke-width=".8"/>
<text x="2" y="13.5" font-family="Liberation Serif" font-weight="700" font-size="16" fill="#2c58b8">A</text>
<text x="0.5" y="29" font-family="Liberation Serif" font-weight="700" font-size="17" fill="#8e2a22">Я</text></svg>
<div class="t " style="left:663.7px;top:126.0px;font-size:11.5px;color:#2c2c2c;font-weight:400;">Сортировка</div>
<div class="t " style="left:666.5px;top:139.4px;font-size:11.1px;color:#2c2c2c;font-weight:400;">и фильтр</div>
<svg class="a" style="left:719px;top:143px;" width="5" height="3" viewBox="0 0 5 3"><path d="M0 0H5L2.5 3Z" fill="#444"/></svg>
<svg class="a" style="left:746px;top:91px;" width="29" height="26" viewBox="0 0 29 26"><defs><linearGradient id="bg1" x1="0" x2="1"><stop offset="0" stop-color="#4a6ea8"/><stop offset=".35" stop-color="#c7d8f0"/><stop offset=".7" stop-color="#7d9fd2"/><stop offset="1" stop-color="#3e5f98"/></linearGradient></defs>
<rect x="8" y="0.5" width="4" height="4" rx="1.5" fill="url(#bg1)" stroke="#3a5486" stroke-width=".6"/><rect x="17" y="0.5" width="4" height="4" rx="1.5" fill="url(#bg1)" stroke="#3a5486" stroke-width=".6"/>
<rect x="4.5" y="4" width="10" height="10" rx="2" fill="url(#bg1)" stroke="#3a5486" stroke-width=".6"/><rect x="14.5" y="4" width="10" height="10" rx="2" fill="url(#bg1)" stroke="#3a5486" stroke-width=".6"/>
<rect x="0.5" y="12" width="13" height="13.5" rx="2" fill="url(#bg1)" stroke="#3a5486" stroke-width=".6"/><rect x="15.5" y="12" width="13" height="13.5" rx="2" fill="url(#bg1)" stroke="#3a5486" stroke-width=".6"/>
<path d="M13.5 15 H15.5 V20 H13.5Z" fill="#3e5f98"/></svg>
<div class="t " style="left:739.9px;top:126.0px;font-size:11.4px;color:#2c2c2c;font-weight:400;">Найти и</div>
<div class="t " style="left:733.4px;top:139.6px;font-size:10.9px;color:#2c2c2c;font-weight:400;">выделить</div>
<svg class="a" style="left:785px;top:143px;" width="5" height="3" viewBox="0 0 5 3"><path d="M0 0H5L2.5 3Z" fill="#444"/></svg>
<div class="a" style="left:40px;top:169px;width:814px;height:1px;background:#7f868e"></div>
<div class="a" style="left:40px;top:170px;width:814px;height:3px;background:#d6dade"></div>
<div class="a" style="left:40px;top:173px;width:814px;height:1px;background:#8b9198"></div>
<div class="a" style="left:40px;top:174px;width:814px;height:20px;background:#fff"></div>
<div class="a" style="left:40px;top:194px;width:814px;height:1px;background:#8b9198"></div>
<div class="a" style="left:40px;top:195px;width:814px;height:3px;background:linear-gradient(#f4f6fa,#e6eaf3)"></div>
<div class="a" style="left:40px;top:198px;width:814px;height:1px;background:#7f868e"></div>
<div class="a" style="left:39px;top:169px;width:1px;height:510px;background:#6c7681"></div>
<div class="a" style="left:854px;top:169px;width:1px;height:504px;background:#6c7681"></div>
<div class="a" style="left:40px;top:169px;width:1px;height:504px;background:#e4e7eb"></div>
<div class="t " style="left:-188.4px;width:600px;text-align:center;top:180.0px;font-size:11.5px;color:#111;font-weight:400;">B5</div>
<svg class="a" style="left:188px;top:182px;" width="7" height="4" viewBox="0 0 7 4"><path d="M0 0H7L3.5 4Z" fill="#222"/></svg>
<div class="a" style="left:201px;top:174px;width:85px;height:20px;background:linear-gradient(#e9ecf0,#dde1e6);border-radius:10px 0 0 10px;border-left:1px solid #a7adb5;border-top:1px solid #b8bdc4;border-bottom:1px solid #b8bdc4;border-right:1px solid #c5cad0"></div>
<div class="a" style="left:207px;top:179px;width:9px;height:9px;border-radius:50%;background:radial-gradient(circle at 40% 35%,#fff,#c9cdd2 70%,#aeb3b9)"></div>
<div class="t " style="left:267.0px;top:179.6px;font-size:12.5px;color:#222;font-weight:700;font-family:'Liberation Serif';font-style:italic">f</div>
<div class="t " style="left:273.0px;top:181.7px;font-size:10px;color:#222;font-weight:700;font-family:'Liberation Serif';font-style:italic">x</div>
<div class="a" style="left:838px;top:174px;width:16px;height:20px;background:linear-gradient(#eef0f3,#dde1e6);border-left:1px solid #c5cad0"></div>
<svg class="a" style="left:842px;top:180px;" width="9" height="6" viewBox="0 0 9 6"><path d="M1 1 L4.5 4.5 L8 1" fill="none" stroke="#444" stroke-width="1.8"/></svg>
<div class="a" style="left:40px;top:199px;width:814px;height:474px;background:#e4e8ed"></div>
<div class="a" style="left:43px;top:202px;width:26px;height:20px;border:1px solid #b5bac1;background:#dfe3e8"></div>
<svg class="a" style="left:50px;top:207px;" width="16" height="13" viewBox="0 0 16 13"><path d="M14 1 V12 H2Z" fill="#b8bcc2"/></svg>
<div class="a" style="left:96px;top:202px;width:741px;height:1px;background:#7b8087"></div>
<div class="a" style="left:96px;top:202px;width:1px;height:16px;background:#7b8087"></div>
<div class="a" style="left:96px;top:217px;width:67px;height:1px;background:#7b8087"></div>
<div class="a" style="left:163px;top:203px;width:674px;height:11px;background:#f4f4f4"></div>
<div class="a" style="left:336px;top:203px;width:173px;height:11px;background:#a6a6a6"></div>
<div class="a" style="left:836px;top:202px;width:1px;height:12px;background:#7b8087"></div>
<svg class="a" style="left:0;top:0" width="894" height="712"><rect x="96.8" y="203" width="1" height="2" fill="#4a4a4a"/><rect x="106.2" y="203" width="1" height="7" fill="#4a4a4a"/><rect x="115.7" y="203" width="1" height="2" fill="#4a4a4a"/><rect x="125.1" y="203" width="1" height="14" fill="#4a4a4a"/><text x="123.6" y="211" font-family="Liberation Sans" font-size="9.5" fill="#555" text-anchor="end">1</text><rect x="134.6" y="203" width="1" height="2" fill="#4a4a4a"/><rect x="144.0" y="203" width="1" height="7" fill="#4a4a4a"/><rect x="153.5" y="203" width="1" height="2" fill="#4a4a4a"/><rect x="172.3" y="203" width="1" height="2" fill="#4a4a4a"/><rect x="181.8" y="203" width="1" height="7" fill="#4a4a4a"/><rect x="191.2" y="203" width="1" height="2" fill="#4a4a4a"/><rect x="200.7" y="203" width="1" height="11" fill="#4a4a4a"/><text x="199.2" y="211" font-family="Liberation Sans" font-size="9.5" fill="#555" text-anchor="end">1</text><rect x="210.2" y="203" width="1" height="2" fill="#4a4a4a"/><rect x="219.6" y="203" width="1" height="7" fill="#4a4a4a"/><rect x="229.1" y="203" width="1" height="2" fill="#4a4a4a"/><rect x="238.5" y="203" width="1" height="11" fill="#4a4a4a"/><text x="237.0" y="211" font-family="Liberation Sans" font-size="9.5" fill="#555" text-anchor="end">2</text><rect x="247.9" y="203" width="1" height="2" fill="#4a4a4a"/><rect x="257.4" y="203" width="1" height="7" fill="#4a4a4a"/><rect x="266.9" y="203" width="1" height="2" fill="#4a4a4a"/><rect x="276.3" y="203" width="1" height="11" fill="#4a4a4a"/><text x="274.8" y="211" font-family="Liberation Sans" font-size="9.5" fill="#555" text-anchor="end">3</text><rect x="285.8" y="203" width="1" height="2" fill="#4a4a4a"/><rect x="295.2" y="203" width="1" height="7" fill="#4a4a4a"/><rect x="304.6" y="203" width="1" height="2" fill="#4a4a4a"/><rect x="314.1" y="203" width="1" height="11" fill="#4a4a4a"/><text x="312.6" y="211" font-family="Liberation Sans" font-size="9.5" fill="#555" text-anchor="end">4</text><rect x="323.5" y="203" width="1" height="2" fill="#4a4a4a"/><rect x="333.0" y="203" width="1" height="7" fill="#4a4a4a"/><rect x="342.4" y="203" width="1" height="2" fill="#4a4a4a"/><rect x="351.9" y="203" width="1" height="11" fill="#4a4a4a"/><text x="350.4" y="211" font-family="Liberation Sans" font-size="9.5" fill="#555a80" text-anchor="end">5</text><rect x="361.4" y="203" width="1" height="2" fill="#4a4a4a"/><rect x="370.8" y="203" width="1" height="7" fill="#4a4a4a"/><rect x="380.2" y="203" width="1" height="2" fill="#4a4a4a"/><rect x="389.7" y="203" width="1" height="11" fill="#4a4a4a"/><text x="388.2" y="211" font-family="Liberation Sans" font-size="9.5" fill="#555a80" text-anchor="end">6</text><rect x="399.1" y="203" width="1" height="2" fill="#4a4a4a"/><rect x="408.6" y="203" width="1" height="7" fill="#4a4a4a"/><rect x="418.0" y="203" width="1" height="2" fill="#4a4a4a"/><rect x="427.5" y="203" width="1" height="11" fill="#4a4a4a"/><text x="426.0" y="211" font-family="Liberation Sans" font-size="9.5" fill="#555a80" text-anchor="end">7</text><rect x="436.9" y="203" width="1" height="2" fill="#4a4a4a"/><rect x="446.4" y="203" width="1" height="7" fill="#4a4a4a"/><rect x="455.9" y="203" width="1" height="2" fill="#4a4a4a"/><rect x="465.3" y="203" width="1" height="11" fill="#4a4a4a"/><text x="463.8" y="211" font-family="Liberation Sans" font-size="9.5" fill="#555a80" text-anchor="end">8</text><rect x="474.8" y="203" width="1" height="2" fill="#4a4a4a"/><rect x="484.2" y="203" width="1" height="7" fill="#4a4a4a"/><rect x="493.6" y="203" width="1" height="2" fill="#4a4a4a"/><rect x="503.1" y="203" width="1" height="11" fill="#4a4a4a"/><text x="501.6" y="211" font-family="Liberation Sans" font-size="9.5" fill="#555a80" text-anchor="end">9</text><rect x="512.5" y="203" width="1" height="2" fill="#4a4a4a"/><rect x="522.0" y="203" width="1" height="7" fill="#4a4a4a"/><rect x="531.4" y="203" width="1" height="2" fill="#4a4a4a"/><rect x="540.9" y="203" width="1" height="11" fill="#4a4a4a"/><text x="539.4" y="211" font-family="Liberation Sans" font-size="9.5" fill="#555" text-anchor="end">10</text><rect x="550.4" y="203" width="1" height="2" fill="#4a4a4a"/><rect x="559.8" y="203" width="1" height="7" fill="#4a4a4a"/><rect x="569.2" y="203" width="1" height="2" fill="#4a4a4a"/><rect x="578.7" y="203" width="1" height="11" fill="#4a4a4a"/><text x="577.2" y="211" font-family="Liberation Sans" font-size="9.5" fill="#555" text-anchor="end">11</text><rect x="588.1" y="203" width="1" height="2" fill="#4a4a4a"/><rect x="597.6" y="203" width="1" height="7" fill="#4a4a4a"/><rect x="607.0" y="203" width="1" height="2" fill="#4a4a4a"/><rect x="616.5" y="203" width="1" height="11" fill="#4a4a4a"/><text x="615.0" y="211" font-family="Liberation Sans" font-size="9.5" fill="#555" text-anchor="end">12</text><rect x="625.9" y="203" width="1" height="2" fill="#4a4a4a"/><rect x="635.4" y="203" width="1" height="7" fill="#4a4a4a"/><rect x="644.9" y="203" width="1" height="2" fill="#4a4a4a"/><rect x="654.3" y="203" width="1" height="11" fill="#4a4a4a"/><text x="652.8" y="211" font-family="Liberation Sans" font-size="9.5" fill="#555" text-anchor="end">13</text><rect x="663.8" y="203" width="1" height="2" fill="#4a4a4a"/><rect x="673.2" y="203" width="1" height="7" fill="#4a4a4a"/><rect x="682.6" y="203" width="1" height="2" fill="#4a4a4a"/><rect x="692.1" y="203" width="1" height="11" fill="#4a4a4a"/><text x="690.6" y="211" font-family="Liberation Sans" font-size="9.5" fill="#555" text-anchor="end">14</text><rect x="701.5" y="203" width="1" height="2" fill="#4a4a4a"/><rect x="711.0" y="203" width="1" height="7" fill="#4a4a4a"/><rect x="720.4" y="203" width="1" height="2" fill="#4a4a4a"/><rect x="729.9" y="203" width="1" height="11" fill="#4a4a4a"/><text x="728.4" y="211" font-family="Liberation Sans" font-size="9.5" fill="#555" text-anchor="end">15</text><rect x="739.3" y="203" width="1" height="2" fill="#4a4a4a"/><rect x="748.8" y="203" width="1" height="7" fill="#4a4a4a"/><rect x="758.2" y="203" width="1" height="2" fill="#4a4a4a"/><rect x="767.7" y="203" width="1" height="11" fill="#4a4a4a"/><text x="766.2" y="211" font-family="Liberation Sans" font-size="9.5" fill="#555" text-anchor="end">16</text><rect x="777.1" y="203" width="1" height="2" fill="#4a4a4a"/><rect x="786.6" y="203" width="1" height="7" fill="#4a4a4a"/><rect x="796.0" y="203" width="1" height="2" fill="#4a4a4a"/><rect x="805.5" y="203" width="1" height="11" fill="#4a4a4a"/><text x="804.0" y="211" font-family="Liberation Sans" font-size="9.5" fill="#555" text-anchor="end">17</text><rect x="814.9" y="203" width="1" height="2" fill="#4a4a4a"/><rect x="824.4" y="203" width="1" height="7" fill="#4a4a4a"/><rect x="833.8" y="203" width="1" height="2" fill="#4a4a4a"/></svg>
<div class="a" style="left:0;top:0;width:838px;height:240px;overflow:hidden">
<div class="a" style="left:162px;top:214px;width:174px;height:21px;background:#dfe3e8;border:1px solid #9ea4ac"></div>
<div class="t " style="left:-51.5px;width:600px;text-align:center;top:219.8px;font-size:12.5px;color:#333;font-weight:400;">A</div>
<div class="a" style="left:335px;top:214px;width:174px;height:21px;background:linear-gradient(#fde590,#fdd55e);border:1px solid #d8982e"></div>
<div class="t " style="left:121.5px;width:600px;text-align:center;top:219.8px;font-size:12.5px;color:#333;font-weight:400;">B</div>
<div class="a" style="left:508px;top:214px;width:207px;height:21px;background:#dfe3e8;border:1px solid #9ea4ac"></div>
<div class="t " style="left:311.0px;width:600px;text-align:center;top:219.8px;font-size:12.5px;color:#333;font-weight:400;">C</div>
<div class="a" style="left:714px;top:214px;width:174px;height:21px;background:#dfe3e8;border:1px solid #9ea4ac"></div>
<div class="t " style="left:500.5px;width:600px;text-align:center;top:219.8px;font-size:12.5px;color:#333;font-weight:400;">D</div>
</div>
<div class="a" style="left:163px;top:235px;width:675px;height:12px;background:linear-gradient(#dde1e6,#e4e8ed)"></div>
<div class="a" style="left:87px;top:239px;width:751px;height:395px;background:linear-gradient(to right,rgba(150,156,165,0),rgba(150,156,165,.45));"></div>
<div class="a" style="left:95px;top:247px;width:743px;height:387px;background:#fff;box-shadow:-2px -2px 6px rgba(120,128,140,.55)"></div>
<div class="a" style="left:43px;top:248px;width:18px;height:72px;background:#e4e8ed;border:1px solid #7b8087;border-bottom:none"></div>
<div class="a" style="left:43px;top:282px;width:18px;height:1px;background:#7b8087"></div>
<div class="a" style="left:43px;top:320px;width:14px;height:314px;background:#f4f4f4;border-left:1px solid #7b8087"></div>
<div class="a" style="left:44px;top:407px;width:12px;height:21px;background:#a6a6a6"></div>
<svg class="a" style="left:0;top:0" width="894" height="712"><rect x="44" y="254.0" width="2" height="1" fill="#4a4a4a"/><rect x="44" y="263.0" width="7" height="1" fill="#4a4a4a"/><rect x="44" y="272.7" width="2" height="1" fill="#4a4a4a"/><rect x="44" y="291.7" width="2" height="1" fill="#4a4a4a"/><rect x="44" y="300.9" width="7" height="1" fill="#4a4a4a"/><rect x="44" y="310.7" width="2" height="1" fill="#4a4a4a"/><rect x="44" y="331.8" width="2" height="1" fill="#4a4a4a"/><rect x="44" y="341.5" width="7" height="1" fill="#4a4a4a"/><rect x="44" y="351.1" width="2" height="1" fill="#4a4a4a"/><rect x="44" y="360.8" width="11" height="1" fill="#4a4a4a"/><text transform="translate(51.5 367.3) rotate(-90)" font-family="Liberation Sans" font-size="8.5" fill="#555a80">1</text><rect x="44" y="370.5" width="2" height="1" fill="#4a4a4a"/><rect x="44" y="380.2" width="7" height="1" fill="#4a4a4a"/><rect x="44" y="389.8" width="2" height="1" fill="#4a4a4a"/><rect x="44" y="399.5" width="11" height="1" fill="#4a4a4a"/><text transform="translate(51.5 406.0) rotate(-90)" font-family="Liberation Sans" font-size="8.5" fill="#555a80">2</text><rect x="44" y="409.2" width="2" height="1" fill="#4a4a4a"/><rect x="44" y="418.9" width="7" height="1" fill="#4a4a4a"/><rect x="44" y="428.5" width="2" height="1" fill="#4a4a4a"/><rect x="44" y="438.2" width="11" height="1" fill="#4a4a4a"/><text transform="translate(51.5 444.7) rotate(-90)" font-family="Liberation Sans" font-size="8.5" fill="#555a80">3</text><rect x="44" y="447.9" width="2" height="1" fill="#4a4a4a"/><rect x="44" y="457.6" width="7" height="1" fill="#4a4a4a"/><rect x="44" y="467.2" width="2" height="1" fill="#4a4a4a"/><rect x="44" y="476.9" width="11" height="1" fill="#4a4a4a"/><text transform="translate(51.5 483.4) rotate(-90)" font-family="Liberation Sans" font-size="8.5" fill="#555a80">4</text><rect x="44" y="486.6" width="2" height="1" fill="#4a4a4a"/><rect x="44" y="496.2" width="7" height="1" fill="#4a4a4a"/><rect x="44" y="505.9" width="2" height="1" fill="#4a4a4a"/><rect x="44" y="515.6" width="11" height="1" fill="#4a4a4a"/><text transform="translate(51.5 522.1) rotate(-90)" font-family="Liberation Sans" font-size="8.5" fill="#555a80">5</text><rect x="44" y="525.3" width="2" height="1" fill="#4a4a4a"/><rect x="44" y="535.0" width="7" height="1" fill="#4a4a4a"/><rect x="44" y="544.6" width="2" height="1" fill="#4a4a4a"/><rect x="44" y="554.3" width="11" height="1" fill="#4a4a4a"/><text transform="translate(51.5 560.8) rotate(-90)" font-family="Liberation Sans" font-size="8.5" fill="#555a80">6</text><rect x="44" y="564.0" width="2" height="1" fill="#4a4a4a"/><rect x="44" y="573.7" width="7" height="1" fill="#4a4a4a"/><rect x="44" y="583.3" width="2" height="1" fill="#4a4a4a"/><rect x="44" y="593.0" width="11" height="1" fill="#4a4a4a"/><text transform="translate(51.5 599.5) rotate(-90)" font-family="Liberation Sans" font-size="8.5" fill="#555a80">7</text><rect x="44" y="602.7" width="2" height="1" fill="#4a4a4a"/><rect x="44" y="612.4" width="7" height="1" fill="#4a4a4a"/><rect x="44" y="622.0" width="2" height="1" fill="#4a4a4a"/><rect x="44" y="631.7" width="11" height="1" fill="#4a4a4a"/><text transform="translate(51.5 638.2) rotate(-90)" font-family="Liberation Sans" font-size="8.5" fill="#555a80">8</text><rect x="43" y="631" width="14" height="1.5" fill="#555"/></svg>
<div class="a" style="left:56px;top:319px;width:27px;height:21px;background:#dfe3e8;border:1px solid #a5abb3"></div>
<div class="t " style="left:-230.2px;width:600px;text-align:center;top:325.2px;font-size:12px;color:#333;font-weight:400;">1</div>
<div class="a" style="left:56px;top:339px;width:27px;height:26px;background:#dfe3e8;border:1px solid #a5abb3"></div>
<div class="t " style="left:-230.2px;width:600px;text-align:center;top:350.2px;font-size:12px;color:#333;font-weight:400;">2</div>
<div class="a" style="left:56px;top:364px;width:27px;height:22px;background:#dfe3e8;border:1px solid #a5abb3"></div>
<div class="t " style="left:-230.2px;width:600px;text-align:center;top:371.2px;font-size:12px;color:#333;font-weight:400;">3</div>
<div class="a" style="left:56px;top:385px;width:27px;height:22px;background:#dfe3e8;border:1px solid #a5abb3"></div>
<div class="t " style="left:-230.2px;width:600px;text-align:center;top:392.2px;font-size:12px;color:#333;font-weight:400;">4</div>
<div class="a" style="left:56px;top:406px;width:27px;height:22px;background:linear-gradient(#fde590,#fdd55e);border:1px solid #d8982e"></div>
<div class="t " style="left:-230.2px;width:600px;text-align:center;top:413.2px;font-size:12px;color:#333;font-weight:400;">5</div>
<div class="a" style="left:56px;top:427px;width:27px;height:21px;background:#dfe3e8;border:1px solid #a5abb3"></div>
<div class="t " style="left:-230.2px;width:600px;text-align:center;top:433.2px;font-size:12px;color:#333;font-weight:400;">6</div>
<div class="a" style="left:56px;top:447px;width:27px;height:21px;background:#dfe3e8;border:1px solid #a5abb3"></div>
<div class="t " style="left:-230.2px;width:600px;text-align:center;top:453.2px;font-size:12px;color:#333;font-weight:400;">7</div>
<div class="a" style="left:56px;top:467px;width:27px;height:21px;background:#dfe3e8;border:1px solid #a5abb3"></div>
<div class="t " style="left:-230.2px;width:600px;text-align:center;top:473.2px;font-size:12px;color:#0000ff;font-weight:400;">8</div>
<div class="a" style="left:56px;top:487px;width:27px;height:21px;background:#dfe3e8;border:1px solid #a5abb3"></div>
<div class="t " style="left:-230.2px;width:600px;text-align:center;top:493.2px;font-size:12px;color:#0000ff;font-weight:400;">9</div>
<div class="a" style="left:56px;top:507px;width:27px;height:21px;background:#dfe3e8;border:1px solid #a5abb3"></div>
<div class="t " style="left:-230.2px;width:600px;text-align:center;top:513.2px;font-size:12px;color:#0000ff;font-weight:400;">10</div>
<div class="a" style="left:56px;top:527px;width:27px;height:21px;background:#dfe3e8;border:1px solid #a5abb3"></div>
<div class="t " style="left:-230.2px;width:600px;text-align:center;top:533.2px;font-size:12px;color:#0000ff;font-weight:400;">11</div>
<div class="a" style="left:56px;top:547px;width:27px;height:21px;background:#dfe3e8;border:1px solid #a5abb3"></div>
<div class="t " style="left:-230.2px;width:600px;text-align:center;top:553.2px;font-size:12px;color:#0000ff;font-weight:400;">12</div>
<div class="a" style="left:56px;top:567px;width:27px;height:21px;background:#dfe3e8;border:1px solid #a5abb3"></div>
<div class="t " style="left:-230.2px;width:600px;text-align:center;top:573.2px;font-size:12px;color:#0000ff;font-weight:400;">14</div>
<div class="a" style="left:56px;top:587px;width:27px;height:21px;background:#dfe3e8;border:1px solid #a5abb3"></div>
<div class="t " style="left:-230.2px;width:600px;text-align:center;top:593.2px;font-size:12px;color:#0000ff;font-weight:400;">15</div>
<div class="a" style="left:56px;top:607px;width:27px;height:21px;background:#dfe3e8;border:1px solid #a5abb3"></div>
<div class="t " style="left:-230.2px;width:600px;text-align:center;top:613.2px;font-size:12px;color:#0000ff;font-weight:400;">16</div>
<div class="a" style="left:56px;top:627px;width:27px;height:21px;background:#dfe3e8;border:1px solid #a5abb3"></div>
<div class="a" style="left:83px;top:320px;width:12px;height:314px;background:linear-gradient(to right,#e4e8ed 0,#e4e8ed 5px,#c9ced5 12px)"></div>
<svg class="a" style="left:0;top:0" width="894" height="712"><rect x="162" y="319" width="676" height="1" fill="#dadcdd"/><rect x="162" y="339" width="676" height="1" fill="#dadcdd"/><rect x="162" y="364" width="676" height="1" fill="#dadcdd"/><rect x="162" y="385" width="676" height="1" fill="#dadcdd"/><rect x="162" y="406" width="676" height="1" fill="#dadcdd"/><rect x="162" y="427" width="676" height="1" fill="#dadcdd"/><rect x="162" y="447" width="676" height="1" fill="#dadcdd"/><rect x="335" y="319" width="1" height="20" fill="#dadcdd"/><rect x="335" y="385" width="1" height="62" fill="#dadcdd"/><rect x="508" y="319" width="1" height="20" fill="#dadcdd"/><rect x="508" y="385" width="1" height="62" fill="#dadcdd"/><rect x="714" y="319" width="1" height="20" fill="#dadcdd"/><rect x="714" y="385" width="1" height="62" fill="#dadcdd"/><rect x="162" y="319" width="1" height="128" fill="#dadcdd"/></svg>
<div class="t " style="left:486.6px;top:346.1px;font-size:15.8px;color:#111;font-weight:700;letter-spacing:0.27px">Таблица заработной платы персонала</div>
<div class="t " style="left:601.6px;top:369.3px;font-size:14px;color:#111;font-weight:700;letter-spacing:0.25px">за 2016 год</div>
<div class="a" style="left:334px;top:405px;width:177px;height:25px;border:2px solid #111"></div>
<div class="a" style="left:506px;top:425px;width:6px;height:6px;background:#111;border:1px solid #fff"></div>
<div class="a" style="left:0;top:0;width:838px;height:634px;overflow:hidden">
<div class="a" style="left:162px;top:447px;width:700px;height:21px;background:#604a7b"></div>
<div class="t " style="left:-51.0px;width:600px;text-align:center;top:452.1px;font-size:13.4px;color:#fff;font-weight:700;">Имя</div>
<div class="t " style="left:122.0px;width:600px;text-align:center;top:452.1px;font-size:13.4px;color:#fff;font-weight:700;">Пол</div>
<div class="t " style="left:312.0px;width:600px;text-align:center;top:452.6px;font-size:12.8px;color:#fff;font-weight:700;">Категория персонала</div>
<div class="t " style="left:501.0px;width:600px;text-align:center;top:452.1px;font-size:13.4px;color:#fff;font-weight:700;">Дата</div>
<div class="a" style="left:318px;top:449px;width:17px;height:17px;background:linear-gradient(#fdfdfd,#e6e8eb);border:1px solid #c8ccd1"></div>
<svg class="a" style="left:323px;top:456px;" width="7" height="4" viewBox="0 0 7 4"><path d="M0 0H7L3.5 4Z" fill="#555"/></svg>
<div class="a" style="left:491px;top:449px;width:17px;height:17px;background:linear-gradient(#fdfdfd,#e6e8eb);border:1px solid #c8ccd1"></div>
<svg class="a" style="left:496px;top:456px;" width="7" height="4" viewBox="0 0 7 4"><path d="M0 0H7L3.5 4Z" fill="#555"/></svg>
<div class="a" style="left:697px;top:449px;width:17px;height:17px;background:linear-gradient(#fdfdfd,#e6e8eb);border:1px solid #c8ccd1"></div>
<svg class="a" style="left:702px;top:456px;" width="7" height="4" viewBox="0 0 7 4"><path d="M0 0H7L3.5 4Z" fill="#555"/></svg>
<div class="a" style="left:162px;top:467px;width:173px;height:20px;background:#92d050"></div>
<div class="t " style="left:165.0px;top:472.2px;font-size:13.55px;color:#111;font-weight:400;-webkit-text-stroke:0.25px #111;">Николаев А. Д.</div>
<div class="t " style="left:122.5px;width:600px;text-align:center;top:472.2px;font-size:13.6px;color:#111;font-weight:400;-webkit-text-stroke:0.25px #111;">муж.</div>
<div class="t " style="left:312.0px;width:600px;text-align:center;top:472.1px;font-size:13.66px;color:#111;font-weight:400;-webkit-text-stroke:0.25px #111;">Основной персонал</div>
<div class="t " style="left:232.6px;width:600px;text-align:right;top:472.5px;font-size:13.2px;color:#111;font-weight:400;-webkit-text-stroke:0.25px #111;letter-spacing:-0.15px">25.05.2016</div>
<div class="a" style="left:162px;top:487px;width:173px;height:20px;background:#92d050"></div>
<div class="t " style="left:165.0px;top:492.2px;font-size:13.55px;color:#111;font-weight:400;-webkit-text-stroke:0.25px #111;">Сафронова В. М.</div>
<div class="t " style="left:122.5px;width:600px;text-align:center;top:492.2px;font-size:13.6px;color:#111;font-weight:400;-webkit-text-stroke:0.25px #111;">жен.</div>
<div class="t " style="left:312.0px;width:600px;text-align:center;top:492.1px;font-size:13.66px;color:#111;font-weight:400;-webkit-text-stroke:0.25px #111;">Основной персонал</div>
<div class="t " style="left:232.6px;width:600px;text-align:right;top:492.5px;font-size:13.2px;color:#111;font-weight:400;-webkit-text-stroke:0.25px #111;letter-spacing:-0.15px">25.05.2016</div>
<div class="a" style="left:162px;top:507px;width:173px;height:20px;background:#92d050"></div>
<div class="t " style="left:165.0px;top:512.2px;font-size:13.55px;color:#111;font-weight:400;-webkit-text-stroke:0.25px #111;">Коваль Л. П.</div>
<div class="t " style="left:122.5px;width:600px;text-align:center;top:512.2px;font-size:13.6px;color:#111;font-weight:400;-webkit-text-stroke:0.25px #111;">жен.</div>
<div class="t " style="left:312.0px;width:600px;text-align:center;top:512.1px;font-size:13.66px;color:#111;font-weight:400;-webkit-text-stroke:0.25px #111;">Вспомогательный персонал</div>
<div class="t " style="left:232.6px;width:600px;text-align:right;top:512.5px;font-size:13.2px;color:#111;font-weight:400;-webkit-text-stroke:0.25px #111;letter-spacing:-0.15px">25.05.2016</div>
<div class="a" style="left:162px;top:527px;width:173px;height:20px;background:#92d050"></div>
<div class="t " style="left:165.0px;top:532.2px;font-size:13.55px;color:#111;font-weight:400;-webkit-text-stroke:0.25px #111;">Парфенов Д. Ф.</div>
<div class="t " style="left:122.5px;width:600px;text-align:center;top:532.2px;font-size:13.6px;color:#111;font-weight:400;-webkit-text-stroke:0.25px #111;">муж.</div>
<div class="t " style="left:312.0px;width:600px;text-align:center;top:532.1px;font-size:13.66px;color:#111;font-weight:400;-webkit-text-stroke:0.25px #111;">Основной персонал</div>
<div class="t " style="left:232.6px;width:600px;text-align:right;top:532.5px;font-size:13.2px;color:#111;font-weight:400;-webkit-text-stroke:0.25px #111;letter-spacing:-0.15px">25.05.2016</div>
<div class="a" style="left:162px;top:547px;width:173px;height:20px;background:#92d050"></div>
<div class="t " style="left:165.0px;top:552.2px;font-size:13.55px;color:#111;font-weight:400;-webkit-text-stroke:0.25px #111;">Петров Ф. Л.</div>
<div class="t " style="left:122.5px;width:600px;text-align:center;top:552.2px;font-size:13.6px;color:#111;font-weight:400;-webkit-text-stroke:0.25px #111;">муж.</div>
<div class="t " style="left:312.0px;width:600px;text-align:center;top:552.1px;font-size:13.66px;color:#111;font-weight:400;-webkit-text-stroke:0.25px #111;">Основной персонал</div>
<div class="t " style="left:232.6px;width:600px;text-align:right;top:552.5px;font-size:13.2px;color:#111;font-weight:400;-webkit-text-stroke:0.25px #111;letter-spacing:-0.15px">25.05.2016</div>
<div class="a" style="left:162px;top:567px;width:173px;height:20px;background:#92d050"></div>
<div class="t " style="left:165.0px;top:572.2px;font-size:13.55px;color:#111;font-weight:400;-webkit-text-stroke:0.25px #111;">Николаев А. Д.</div>
<div class="t " style="left:122.5px;width:600px;text-align:center;top:572.2px;font-size:13.6px;color:#111;font-weight:400;-webkit-text-stroke:0.25px #111;">муж.</div>
<div class="t " style="left:312.0px;width:600px;text-align:center;top:572.1px;font-size:13.66px;color:#111;font-weight:400;-webkit-text-stroke:0.25px #111;">Основной персонал</div>
<div class="t " style="left:232.6px;width:600px;text-align:right;top:572.5px;font-size:13.2px;color:#111;font-weight:400;-webkit-text-stroke:0.25px #111;letter-spacing:-0.15px">23.06.2016</div>
<div class="a" style="left:162px;top:587px;width:173px;height:20px;background:#92d050"></div>
<div class="t " style="left:165.0px;top:592.2px;font-size:13.55px;color:#111;font-weight:400;-webkit-text-stroke:0.25px #111;">Сафронова В. М.</div>
<div class="t " style="left:122.5px;width:600px;text-align:center;top:592.2px;font-size:13.6px;color:#111;font-weight:400;-webkit-text-stroke:0.25px #111;">жен.</div>
<div class="t " style="left:312.0px;width:600px;text-align:center;top:592.1px;font-size:13.66px;color:#111;font-weight:400;-webkit-text-stroke:0.25px #111;">Основной персонал</div>
<div class="t " style="left:232.6px;width:600px;text-align:right;top:592.5px;font-size:13.2px;color:#111;font-weight:400;-webkit-text-stroke:0.25px #111;letter-spacing:-0.15px">23.06.2016</div>
<div class="a" style="left:162px;top:607px;width:173px;height:20px;background:#92d050"></div>
<div class="t " style="left:165.0px;top:612.2px;font-size:13.55px;color:#111;font-weight:400;-webkit-text-stroke:0.25px #111;">Коваль Л. П.</div>
<div class="t " style="left:122.5px;width:600px;text-align:center;top:612.2px;font-size:13.6px;color:#111;font-weight:400;-webkit-text-stroke:0.25px #111;">жен.</div>
<div class="t " style="left:312.0px;width:600px;text-align:center;top:612.1px;font-size:13.66px;color:#111;font-weight:400;-webkit-text-stroke:0.25px #111;">Вспомогательный персонал</div>
<div class="t " style="left:232.6px;width:600px;text-align:right;top:612.5px;font-size:13.2px;color:#111;font-weight:400;-webkit-text-stroke:0.25px #111;letter-spacing:-0.15px">23.06.2016</div>
<div class="a" style="left:162px;top:627px;width:173px;height:20px;background:#92d050"></div>
<div class="t " style="left:165.0px;top:632.2px;font-size:13.55px;color:#111;font-weight:400;-webkit-text-stroke:0.25px #111;">Парфенов Д. Ф.</div>
<div class="t " style="left:122.5px;width:600px;text-align:center;top:632.2px;font-size:13.6px;color:#111;font-weight:400;-webkit-text-stroke:0.25px #111;">муж.</div>
<div class="t " style="left:312.0px;width:600px;text-align:center;top:632.1px;font-size:13.66px;color:#111;font-weight:400;-webkit-text-stroke:0.25px #111;">Основной персонал</div>
<div class="t " style="left:232.6px;width:600px;text-align:right;top:632.5px;font-size:13.2px;color:#111;font-weight:400;-webkit-text-stroke:0.25px #111;letter-spacing:-0.15px">23.06.2016</div>
<svg class="a" style="left:0;top:0" width="894" height="712"><rect x="162" y="467" width="700" height="1" fill="#000"/><rect x="162" y="487" width="700" height="1" fill="#000"/><rect x="162" y="507" width="700" height="1" fill="#000"/><rect x="162" y="527" width="700" height="1" fill="#000"/><rect x="162" y="547" width="700" height="1" fill="#000"/><rect x="162" y="567" width="700" height="1" fill="#000"/><rect x="162" y="587" width="700" height="1" fill="#000"/><rect x="162" y="607" width="700" height="1" fill="#000"/><rect x="162" y="627" width="700" height="1" fill="#000"/><rect x="162" y="647" width="700" height="1" fill="#000"/><rect x="335" y="447" width="527" height="1" fill="#000"/><rect x="162" y="447" width="1" height="200" fill="#000"/><rect x="335" y="447" width="1" height="200" fill="#000"/><rect x="508" y="447" width="1" height="200" fill="#000"/><rect x="714" y="447" width="1" height="200" fill="#000"/></svg>
</div>
<div class="a" style="left:838px;top:199px;width:16px;height:435px;background:linear-gradient(to right,#dfe3e8,#eceef2 60%,#e4e7eb)"></div>
<div class="a" style="left:840px;top:200px;width:13px;height:7px;background:#fff;border:1px solid #8c939b"></div>
<div class="a" style="left:842px;top:203px;width:9px;height:1px;background:#8c939b"></div>
<svg class="a" style="left:841px;top:212px;" width="9" height="6" viewBox="0 0 9 6"><path d="M0 5.5H9L4.5 0Z" fill="#3c4046"/></svg>
<div class="a" style="left:838px;top:224px;width:15px;height:26px;border:1px solid #9aa1a9;border-radius:2px;background:linear-gradient(to right,#f3f5f8,#e1e5ea)"></div>
<div class="a" style="left:842px;top:233px;width:7px;height:1px;background:#6a7078"></div>
<div class="a" style="left:842px;top:235px;width:7px;height:1px;background:#6a7078"></div>
<div class="a" style="left:842px;top:237px;width:7px;height:1px;background:#6a7078"></div>
<div class="a" style="left:842px;top:239px;width:7px;height:1px;background:#6a7078"></div>
<svg class="a" style="left:841px;top:622px;" width="9" height="6" viewBox="0 0 9 6"><path d="M0 0.5H9L4.5 6Z" fill="#5a5e64"/></svg>
<div class="a" style="left:145px;top:270px;width:48px;height:37px;border:5px solid #ff0000;border-radius:11px;box-shadow:2px 3px 5px rgba(0,0,0,.35), inset 1px 2px 4px rgba(0,0,0,.3)"></div>
<div class="t " style="left:-132.0px;width:600px;text-align:center;top:283.2px;font-size:12px;color:#111;font-weight:400;">1</div>
<div class="a" style="left:40px;top:634px;width:814px;height:16px;background:linear-gradient(#e8ebef,#dde1e6)"></div>
<div class="a" style="left:40px;top:634px;width:798px;height:1px;background:#a3a9b1"></div>
<div class="a" style="left:40px;top:649px;width:814px;height:1px;background:#8a9199"></div>
<svg class="a" style="left:45px;top:637px;" width="56" height="9" viewBox="0 0 56 9"><rect x="0.5" y="1" width="1.3" height="7" fill="#444"/><path d="M2 4.5 L7 1 V8Z" fill="#444"/>
<path d="M16.5 4.5 L21 1 V8Z" fill="#444"/>
<path d="M31 1 L35.5 4.5 L31 8Z" fill="#444"/>
<path d="M45 1 L50 4.5 L45 8Z" fill="#444"/><rect x="50.2" y="1" width="1.3" height="7" fill="#444"/></svg>
<div class="a" style="left:102px;top:635px;width:1px;height:14px;background:#a3a9b1"></div>
<div class="a" style="left:103px;top:635px;width:1px;height:14px;background:#fff"></div>
<div class="a" style="left:40px;top:635px;width:798px;height:1px;background:#f6f7f9"></div>
<svg class="a" style="left:0;top:0" width="894" height="712"><path d="M110.5 649 L123.5 635" stroke="#fff" stroke-width="1.2"/><path d="M110 649 L123 635" stroke="#6f757d" stroke-width="0.9"/><path d="M162.6 649 L175.6 635" stroke="#fff" stroke-width="1.2"/><path d="M162.1 649 L175.1 635" stroke="#6f757d" stroke-width="0.9"/><path d="M216.1 649 L229.1 635" stroke="#fff" stroke-width="1.2"/><path d="M215.6 649 L228.6 635" stroke="#6f757d" stroke-width="0.9"/><path d="M272.7 649 L285.7 635" stroke="#fff" stroke-width="1.2"/><path d="M272.2 649 L285.2 635" stroke="#6f757d" stroke-width="0.9"/><path d="M334.3 649 L347.3 635" stroke="#fff" stroke-width="1.2"/><path d="M333.8 649 L346.8 635" stroke="#6f757d" stroke-width="0.9"/><path d="M444.0 649 L457.0 635" stroke="#fff" stroke-width="1.2"/><path d="M443.5 649 L456.5 635" stroke="#6f757d" stroke-width="0.9"/><path d="M503.5 649 L516.5 635" stroke="#fff" stroke-width="1.2"/><path d="M503 649 L516 635" stroke="#6f757d" stroke-width="0.9"/></svg>
<div class="a" style="left:394px;top:634px;width:50px;height:15px;background:#fff"></div>
<div class="a" style="left:393px;top:634px;width:1px;height:16px;background:#a3a9b1"></div>
<svg class="a" style="left:443px;top:634px;" width="14" height="15" viewBox="0 0 14 15"><path d="M0 0 V15 H1 L14 1 V0Z" fill="#fff"/><path d="M0.5 15 L14 0.5" stroke="#8a9098"/></svg>
<div class="t " style="left:122.8px;top:637.2px;font-size:12.3px;color:#3a3f58;font-weight:400;">Лист5</div>
<div class="t " style="left:175.7px;top:637.2px;font-size:12.3px;color:#3a3f58;font-weight:400;">Лист8</div>
<div class="t " style="left:228.6px;top:637.2px;font-size:12.3px;color:#3a3f58;font-weight:400;">Лист9</div>
<div class="t " style="left:283.0px;top:637.2px;font-size:12.3px;color:#3a3f58;font-weight:400;">Лист10</div>
<div class="t " style="left:343.8px;top:637.2px;font-size:12.3px;color:#3a3f58;font-weight:400;">Лист11</div>
<div class="t " style="left:457.5px;top:637.2px;font-size:12.3px;color:#3a3f58;font-weight:400;">Лист2</div>
<div class="t " style="left:402.8px;top:637.4px;font-size:12.2px;color:#222;font-weight:700;">Лист1</div>
<div class="t" style="left:509px;top:636px;width:10px;height:13px;overflow:hidden;font-size:12.3px;color:#3a3f58">Л</div>
<div class="a" style="left:520px;top:635px;width:7px;height:14px;background:#fff;border:1px solid #8c939b"></div>
<div class="a" style="left:523px;top:638px;width:1px;height:8px;background:#555"></div>
<div class="a" style="left:527px;top:634px;width:327px;height:16px;background:linear-gradient(#dfe3e8,#eceef2 60%,#e4e7eb)"></div>
<div class="a" style="left:527px;top:634px;width:311px;height:1px;background:#c8cdd3"></div>
<svg class="a" style="left:532px;top:638px;" width="6" height="9" viewBox="0 0 6 9"><path d="M5.5 0 V9 L0 4.5Z" fill="#3c4046"/></svg>
<div class="a" style="left:545px;top:634px;width:133px;height:16px;border:1px solid #9aa1a9;border-radius:2px;background:linear-gradient(#f3f5f8,#e1e5ea)"></div>
<div class="a" style="left:606px;top:638px;width:1px;height:7px;background:#6a7078"></div>
<div class="a" style="left:608px;top:638px;width:1px;height:7px;background:#6a7078"></div>
<div class="a" style="left:610px;top:638px;width:1px;height:7px;background:#6a7078"></div>
<div class="a" style="left:612px;top:638px;width:1px;height:7px;background:#6a7078"></div>
<svg class="a" style="left:819px;top:638px;" width="6" height="9" viewBox="0 0 6 9"><path d="M0.5 0 V9 L6 4.5Z" fill="#3c4046"/></svg>
<div class="a" style="left:830px;top:635px;width:8px;height:14px;background:#fff;border:1px solid #8c939b"></div>
<div class="a" style="left:833px;top:638px;width:1px;height:8px;background:#555"></div>
<div class="a" style="left:838px;top:634px;width:16px;height:16px;background:#e4e7eb"></div>
<div class="a" style="left:40px;top:650px;width:814px;height:23px;background:linear-gradient(#eef0f3 0,#e3e6ea 40%,#c9cdd2 100%);border-top:1px solid #b0b5bb;border-bottom:1px solid #6e767e"></div>
<div class="a" style="left:40px;top:651px;width:814px;height:1px;background:#fbfcfd"></div>
<div class="a" style="left:40px;top:673px;width:814px;height:1px;background:#e4edf7"></div>
<div class="t " style="left:48.3px;top:654.8px;font-size:11.6px;color:#333;font-weight:400;">Готово</div>
<div class="t " style="left:100.7px;top:654.8px;font-size:11.6px;color:#333;font-weight:400;">Фильтр: отбор</div>
<div class="a" style="left:187px;top:652px;width:1px;height:19px;background:#b3b9c0"></div>
<div class="a" style="left:188px;top:652px;width:1px;height:19px;background:#fff"></div>
<svg class="a" style="left:196px;top:653px;" width="16" height="14" viewBox="0 0 16 14"><rect x="0.5" y="2.5" width="15" height="11" fill="#fff" stroke="#5b7db8"/><rect x="1" y="3" width="14" height="2.5" fill="#5b8bd0"/>
<path d="M2 7.5H14M2 9.5H14M2 11.5H14" stroke="#7a9bd0"/><circle cx="4" cy="3" r="2.8" fill="#e84030"/></svg>
<div class="a" style="left:222px;top:652px;width:1px;height:19px;background:#b3b9c0"></div>
<div class="a" style="left:223px;top:652px;width:1px;height:19px;background:#fff"></div>
<div class="t " style="left:231.8px;top:656.2px;font-size:10.94px;color:#333;font-weight:400;">Страница: 1 из 6</div>
<div class="a" style="left:329px;top:652px;width:1px;height:19px;background:#b3b9c0"></div>
<div class="a" style="left:330px;top:652px;width:1px;height:19px;background:#fff"></div>
<div class="a" style="left:597px;top:652px;width:1px;height:19px;background:#b3b9c0"></div>
<div class="a" style="left:598px;top:652px;width:1px;height:19px;background:#fff"></div>
<svg class="a" style="left:605px;top:655px;" width="13" height="12" viewBox="0 0 13 12"><rect x="0.5" y="0.5" width="12" height="11" fill="#fff" stroke="#6a7078"/><path d="M0.5 4.5H12.5M0.5 8.5H12.5M4.5 0.5V11.5M8.5 0.5V11.5" stroke="#6a7078"/></svg>
<div class="a" style="left:621px;top:652px;width:18px;height:19px;border:1px solid #e3a43d;border-radius:2px;background:linear-gradient(#fff0b8,#fcd46a)"></div>
<svg class="a" style="left:624px;top:655px;" width="12" height="12" viewBox="0 0 12 12"><rect x="0.5" y="0.5" width="11" height="11" fill="#fff" stroke="#5a6068"/><rect x="2.5" y="2.5" width="7" height="7" fill="#fff" stroke="#8a9098"/><path d="M3.5 4.5H8.5M3.5 6.5H8.5" stroke="#8a9098"/></svg>
<svg class="a" style="left:642px;top:655px;" width="14" height="12" viewBox="0 0 14 12"><rect x="0.5" y="0.5" width="13" height="11" fill="#c9cdd2" stroke="#6a7078"/><rect x="2" y="1" width="3" height="7" fill="#fff"/><rect x="6" y="1" width="3" height="7" fill="#fff"/></svg>
<div class="t " style="left:667.9px;top:656.9px;font-size:10.4px;color:#333;font-weight:400;">100%</div>
<svg class="a" style="left:703px;top:653px;" width="125" height="16" viewBox="0 0 125 16"><circle cx="8" cy="8" r="7.3" fill="url(#zg)" stroke="#8a9098"/>
<defs><linearGradient id="zg" x1="0" y1="0" x2="0" y2="1"><stop offset="0" stop-color="#fff"/><stop offset="1" stop-color="#dde1e6"/></linearGradient></defs>
<rect x="4" y="7" width="8" height="2" fill="#444"/>
<rect x="16" y="7.5" width="100" height="1" fill="#9aa0a8"/>
<path d="M62.5 2.5 H71.5 V11 L67 14 L62.5 11Z" fill="url(#zg)" stroke="#7a8088"/>
<circle cx="124" cy="8" r="7.3" fill="url(#zg)" stroke="#8a9098"/>
<rect x="120" y="7" width="8" height="2" fill="#444"/><rect x="123" y="4" width="2" height="8" fill="#444"/></svg>
<svg class="a" style="left:845px;top:662px;" width="9" height="10" viewBox="0 0 9 10"><g fill="#a8aeb5"><rect x="6" y="1" width="2" height="2"/><rect x="3" y="4" width="2" height="2"/><rect x="6" y="4" width="2" height="2"/><rect x="0" y="7" width="2" height="2"/><rect x="3" y="7" width="2" height="2"/><rect x="6" y="7" width="2" height="2"/></g></svg>
<svg class="a" style="left:518px;top:663px;filter:drop-shadow(1px 1px 1px rgba(0,0,0,.35))" width="14" height="21" viewBox="0 0 14 21"><path d="M1.5 1.5 V17 L5 13.5 L8 19.5 L10.5 18.5 L7.7 12.8 H12.3Z" fill="#fff" stroke="#000" stroke-width="1.5" stroke-linejoin="miter"/></svg>
</body></html>
